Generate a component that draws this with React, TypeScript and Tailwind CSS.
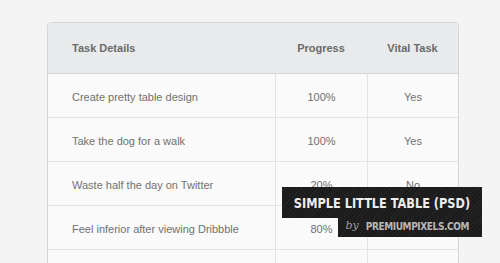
const rows = [
  { task: "Create pretty table design", progress: "100%", vital: "Yes" },
  { task: "Take the dog for a walk", progress: "100%", vital: "Yes" },
  { task: "Waste half the day on Twitter", progress: "20%", vital: "No" },
  { task: "Feel inferior after viewing Dribbble", progress: "80%", vital: "No" },
  { task: "", progress: "", vital: "" },
];

const stripes =
  "bg-[#1b1b1b] bg-[repeating-linear-gradient(135deg,#1b1b1b_0px,#1b1b1b_2px,#242424_2px,#242424_3px)]";

const App = () => {
  return (
    <div
      className="relative h-[263px] w-[500px] overflow-hidden bg-[#f4f4f4] pt-[22px] pl-[47px]"
      style={{ fontFamily: '"Liberation Sans", Arial, sans-serif' }}
    >
      {/* table */}
      <div className="w-[412px] overflow-hidden rounded-t-[4px] border border-[#d6d6d6] bg-[#fafafa]">
        <div className="grid h-[51px] grid-cols-[227px_92px_1fr] items-center border-b border-[#d4d4d4] bg-[#e9eaeb] text-[11px] font-bold text-[#6a6a6a]">
          <div className="pl-[24px]">Task Details</div>
          <div className="text-center">Progress</div>
          <div className="text-center">Vital Task</div>
        </div>

        {rows.map((row, i) => (
          <div
            key={i}
            className="grid h-[44px] grid-cols-[227px_92px_1fr] border-b border-[#e4e4e4] text-[11px] text-[#717171]"
          >
            <div className="flex items-center pt-[4px] pl-[24px]">{row.task}</div>
            <div className="flex items-center justify-center border-l border-[#e4e4e4] pt-[4px]">
              {row.progress}
            </div>
            <div className="flex items-center justify-center border-l border-[#e4e4e4] pt-[4px]">
              {row.vital}
            </div>
          </div>
        ))}
      </div>

      {/* title badge */}
      <div className="absolute top-[187px] left-[282px] flex flex-col items-end">
        <div className={`flex h-[31px] w-[200px] items-center justify-center pt-[2px] ${stripes}`}>
          <span
            className="inline-block scale-x-90 text-[14px] font-bold whitespace-nowrap text-[#eeeeee]"
            style={{ fontFamily: '"DejaVu Sans Condensed", "DejaVu Sans", sans-serif' }}
          >
            SIMPLE LITTLE TABLE (PSD)
          </span>
        </div>
        <div className={`flex h-[19px] w-[144px] items-start justify-end gap-[7px] pr-[13px] ${stripes}`}>
          <span
            className="text-[11px] italic whitespace-nowrap text-[#9a9a9a]"
            style={{ fontFamily: '"DejaVu Serif", serif' }}
          >
            by
          </span>
          <span
            className="pt-[1px] text-[10px] font-bold tracking-[-0.4px] whitespace-nowrap text-[#b8b8b8]"
            style={{ fontFamily: '"DejaVu Sans Condensed", "DejaVu Sans", sans-serif' }}
          >
            PREMIUMPIXELS.COM
          </span>
        </div>
      </div>
    </div>
  );
};

export default App;
